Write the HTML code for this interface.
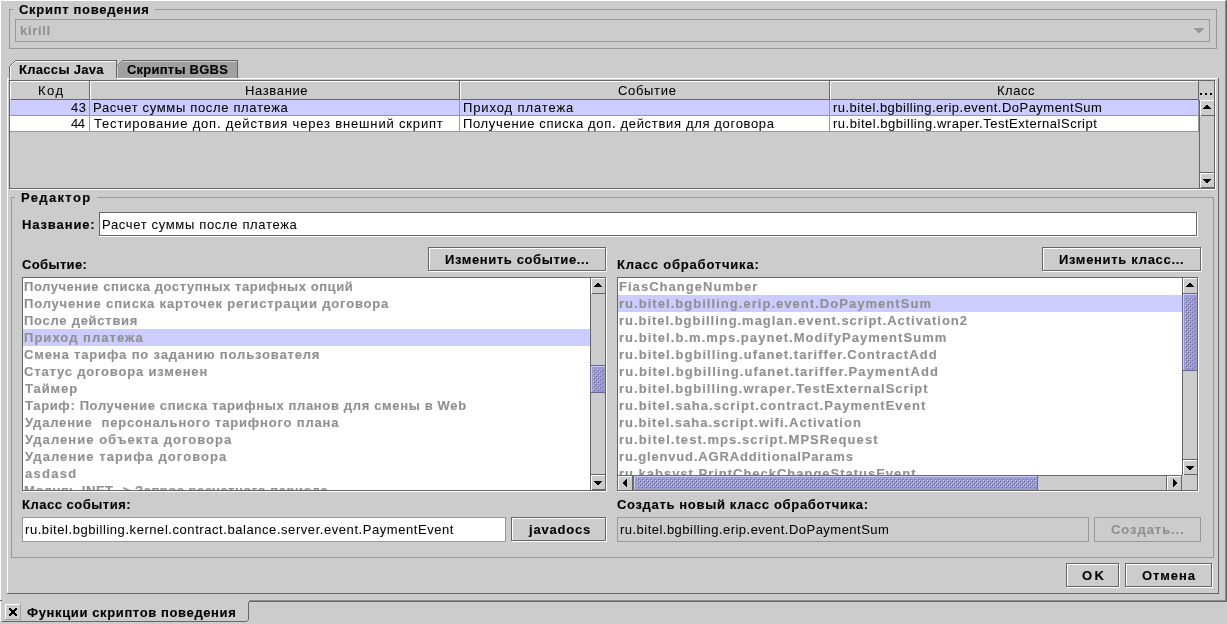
<!DOCTYPE html>
<html><head><meta charset="utf-8"><style>
html,body{margin:0;padding:0;width:1227px;height:624px;overflow:hidden;background:#cccccc}
i{position:absolute;display:block}
b{position:absolute;font-family:"Liberation Sans",sans-serif;font-size:13px;line-height:15px;font-weight:normal;white-space:pre;will-change:transform;-webkit-text-stroke:0.05px currentColor}
b.B{font-weight:bold;-webkit-text-stroke-width:0.12px}
</style></head><body>
<i style="left:0px;top:0px;width:1227px;height:624px;background:#cccccc"></i>
<i style="left:0px;top:0px;width:1226px;height:1px;background:#ffffff"></i>
<i style="left:0px;top:0px;width:1px;height:621px;background:#ffffff"></i>
<i style="left:1225px;top:1px;width:1px;height:600px;background:#8a8a8a"></i>
<i style="left:1226px;top:0px;width:1px;height:602px;background:#666666"></i>
<i style="left:249px;top:600px;width:977px;height:1px;background:#8a8a8a"></i>
<i style="left:249px;top:601px;width:978px;height:1px;background:#666666"></i>
<i style="left:248px;top:601px;width:1px;height:1px;background:#dddddd"></i>
<i style="left:248px;top:602px;width:1px;height:18px;background:#666666"></i>
<i style="left:247px;top:620px;width:1px;height:1px;background:#666666"></i>
<i style="left:2px;top:621px;width:245px;height:1px;background:#666666"></i>
<i style="left:0px;top:600px;width:2px;height:1px;background:#666666"></i>
<i style="left:5px;top:604px;width:16px;height:16px;background:#cccccc"></i>
<i style="left:5px;top:604px;width:15px;height:1px;background:#ffffff"></i>
<i style="left:5px;top:604px;width:1px;height:15px;background:#ffffff"></i>
<i style="left:5px;top:619px;width:16px;height:1px;background:#a0a0a0"></i>
<i style="left:20px;top:604px;width:1px;height:16px;background:#a0a0a0"></i>
<i style="left:9px;top:608px;width:1px;height:1px;background:#000"></i>
<i style="left:16px;top:608px;width:1px;height:1px;background:#000"></i>
<i style="left:10px;top:608px;width:1px;height:1px;background:#000"></i>
<i style="left:9px;top:609px;width:1px;height:1px;background:#000"></i>
<i style="left:15px;top:608px;width:1px;height:1px;background:#000"></i>
<i style="left:16px;top:609px;width:1px;height:1px;background:#000"></i>
<i style="left:10px;top:609px;width:1px;height:1px;background:#000"></i>
<i style="left:15px;top:609px;width:1px;height:1px;background:#000"></i>
<i style="left:11px;top:609px;width:1px;height:1px;background:#000"></i>
<i style="left:10px;top:610px;width:1px;height:1px;background:#000"></i>
<i style="left:14px;top:609px;width:1px;height:1px;background:#000"></i>
<i style="left:15px;top:610px;width:1px;height:1px;background:#000"></i>
<i style="left:11px;top:610px;width:1px;height:1px;background:#000"></i>
<i style="left:14px;top:610px;width:1px;height:1px;background:#000"></i>
<i style="left:12px;top:610px;width:1px;height:1px;background:#000"></i>
<i style="left:11px;top:611px;width:1px;height:1px;background:#000"></i>
<i style="left:13px;top:610px;width:1px;height:1px;background:#000"></i>
<i style="left:14px;top:611px;width:1px;height:1px;background:#000"></i>
<i style="left:12px;top:611px;width:1px;height:1px;background:#000"></i>
<i style="left:13px;top:611px;width:1px;height:1px;background:#000"></i>
<i style="left:13px;top:611px;width:1px;height:1px;background:#000"></i>
<i style="left:12px;top:612px;width:1px;height:1px;background:#000"></i>
<i style="left:12px;top:611px;width:1px;height:1px;background:#000"></i>
<i style="left:13px;top:612px;width:1px;height:1px;background:#000"></i>
<i style="left:13px;top:612px;width:1px;height:1px;background:#000"></i>
<i style="left:12px;top:612px;width:1px;height:1px;background:#000"></i>
<i style="left:14px;top:612px;width:1px;height:1px;background:#000"></i>
<i style="left:13px;top:613px;width:1px;height:1px;background:#000"></i>
<i style="left:11px;top:612px;width:1px;height:1px;background:#000"></i>
<i style="left:12px;top:613px;width:1px;height:1px;background:#000"></i>
<i style="left:14px;top:613px;width:1px;height:1px;background:#000"></i>
<i style="left:11px;top:613px;width:1px;height:1px;background:#000"></i>
<i style="left:15px;top:613px;width:1px;height:1px;background:#000"></i>
<i style="left:14px;top:614px;width:1px;height:1px;background:#000"></i>
<i style="left:10px;top:613px;width:1px;height:1px;background:#000"></i>
<i style="left:11px;top:614px;width:1px;height:1px;background:#000"></i>
<i style="left:15px;top:614px;width:1px;height:1px;background:#000"></i>
<i style="left:10px;top:614px;width:1px;height:1px;background:#000"></i>
<i style="left:16px;top:614px;width:1px;height:1px;background:#000"></i>
<i style="left:15px;top:615px;width:1px;height:1px;background:#000"></i>
<i style="left:9px;top:614px;width:1px;height:1px;background:#000"></i>
<i style="left:10px;top:615px;width:1px;height:1px;background:#000"></i>
<i style="left:16px;top:615px;width:1px;height:1px;background:#000"></i>
<i style="left:9px;top:615px;width:1px;height:1px;background:#000"></i>
<b class="B" style="left:27px;top:605px;letter-spacing:0.620px;color:#000;">Функции скриптов поведения</b>
<i style="left:9px;top:9px;width:1208px;height:1px;background:#999999"></i>
<i style="left:9px;top:48px;width:1208px;height:1px;background:#999999"></i>
<i style="left:9px;top:9px;width:1px;height:40px;background:#999999"></i>
<i style="left:1216px;top:9px;width:1px;height:40px;background:#999999"></i>
<i style="left:13px;top:5px;width:142px;height:8px;background:#cccccc"></i>
<b class="B" style="left:19px;top:2px;letter-spacing:0.700px;color:#000;">Скрипт поведения</b>
<i style="left:15px;top:19px;width:1195px;height:1px;background:#999999"></i>
<i style="left:15px;top:41px;width:1195px;height:1px;background:#999999"></i>
<i style="left:15px;top:19px;width:1px;height:23px;background:#999999"></i>
<i style="left:1209px;top:19px;width:1px;height:23px;background:#999999"></i>
<b class="B" style="left:20px;top:23px;letter-spacing:0.700px;color:#909090;">kirill</b>
<i style="left:1194px;top:28px;width:10px;height:1px;background:#999999"></i>
<i style="left:1195px;top:29px;width:8px;height:1px;background:#999999"></i>
<i style="left:1196px;top:30px;width:6px;height:1px;background:#999999"></i>
<i style="left:1197px;top:31px;width:4px;height:1px;background:#999999"></i>
<i style="left:1198px;top:32px;width:2px;height:1px;background:#999999"></i>
<i style="left:7px;top:78px;width:2px;height:1px;background:#ffffff"></i>
<i style="left:117px;top:78px;width:1101px;height:1px;background:#ffffff"></i>
<i style="left:7px;top:78px;width:1px;height:515px;background:#ffffff"></i>
<i style="left:7px;top:593px;width:1212px;height:1px;background:#666666"></i>
<i style="left:1218px;top:78px;width:1px;height:516px;background:#666666"></i>
<i style="left:117px;top:61px;width:121px;height:17px;background:#a0a0a0"></i>
<i style="left:117px;top:60px;width:5px;height:1px;background:#cccccc"></i>
<i style="left:117px;top:61px;width:4px;height:1px;background:#cccccc"></i>
<i style="left:117px;top:62px;width:3px;height:1px;background:#cccccc"></i>
<i style="left:117px;top:63px;width:2px;height:1px;background:#cccccc"></i>
<i style="left:117px;top:64px;width:1px;height:1px;background:#cccccc"></i>
<i style="left:117px;top:65px;width:0px;height:1px;background:#cccccc"></i>
<i style="left:116px;top:66px;width:1px;height:1px;background:#666666"></i>
<i style="left:117px;top:66px;width:1px;height:1px;background:#cccccc"></i>
<i style="left:117px;top:65px;width:1px;height:1px;background:#666666"></i>
<i style="left:118px;top:65px;width:1px;height:1px;background:#cccccc"></i>
<i style="left:118px;top:64px;width:1px;height:1px;background:#666666"></i>
<i style="left:119px;top:64px;width:1px;height:1px;background:#cccccc"></i>
<i style="left:119px;top:63px;width:1px;height:1px;background:#666666"></i>
<i style="left:120px;top:63px;width:1px;height:1px;background:#cccccc"></i>
<i style="left:120px;top:62px;width:1px;height:1px;background:#666666"></i>
<i style="left:121px;top:62px;width:1px;height:1px;background:#cccccc"></i>
<i style="left:121px;top:61px;width:1px;height:1px;background:#666666"></i>
<i style="left:122px;top:61px;width:1px;height:1px;background:#cccccc"></i>
<i style="left:122px;top:60px;width:116px;height:1px;background:#666666"></i>
<i style="left:122px;top:61px;width:115px;height:1px;background:#cccccc"></i>
<i style="left:117px;top:66px;width:1px;height:12px;background:#cccccc"></i>
<i style="left:237px;top:60px;width:1px;height:18px;background:#666666"></i>
<b class="B" style="left:127px;top:62px;letter-spacing:0.227px;color:#000;">Скрипты BGBS</b>
<i style="left:9px;top:60px;width:6px;height:1px;background:#cccccc"></i>
<i style="left:9px;top:61px;width:5px;height:1px;background:#cccccc"></i>
<i style="left:9px;top:62px;width:4px;height:1px;background:#cccccc"></i>
<i style="left:9px;top:63px;width:3px;height:1px;background:#cccccc"></i>
<i style="left:9px;top:64px;width:2px;height:1px;background:#cccccc"></i>
<i style="left:9px;top:65px;width:1px;height:1px;background:#cccccc"></i>
<i style="left:9px;top:66px;width:1px;height:1px;background:#666666"></i>
<i style="left:10px;top:66px;width:1px;height:1px;background:#ffffff"></i>
<i style="left:10px;top:65px;width:1px;height:1px;background:#666666"></i>
<i style="left:11px;top:65px;width:1px;height:1px;background:#ffffff"></i>
<i style="left:11px;top:64px;width:1px;height:1px;background:#666666"></i>
<i style="left:12px;top:64px;width:1px;height:1px;background:#ffffff"></i>
<i style="left:12px;top:63px;width:1px;height:1px;background:#666666"></i>
<i style="left:13px;top:63px;width:1px;height:1px;background:#ffffff"></i>
<i style="left:13px;top:62px;width:1px;height:1px;background:#666666"></i>
<i style="left:14px;top:62px;width:1px;height:1px;background:#ffffff"></i>
<i style="left:14px;top:61px;width:1px;height:1px;background:#666666"></i>
<i style="left:15px;top:61px;width:1px;height:1px;background:#ffffff"></i>
<i style="left:15px;top:60px;width:1px;height:1px;background:#666666"></i>
<i style="left:9px;top:66px;width:1px;height:13px;background:#666666"></i>
<i style="left:10px;top:67px;width:1px;height:12px;background:#ffffff"></i>
<i style="left:15px;top:60px;width:102px;height:1px;background:#666666"></i>
<i style="left:16px;top:61px;width:100px;height:1px;background:#ffffff"></i>
<i style="left:116px;top:60px;width:1px;height:18px;background:#666666"></i>
<b class="B" style="left:19px;top:62px;letter-spacing:0.300px;color:#000;">Классы Java</b>
<i style="left:9px;top:80px;width:1206px;height:1px;background:#666666"></i>
<i style="left:9px;top:188px;width:1206px;height:1px;background:#666666"></i>
<i style="left:9px;top:80px;width:1px;height:109px;background:#666666"></i>
<i style="left:1214px;top:80px;width:1px;height:109px;background:#666666"></i>
<i style="left:1215px;top:81px;width:1px;height:109px;background:#ffffff"></i>
<i style="left:10px;top:189px;width:1206px;height:1px;background:#ffffff"></i>
<i style="left:10px;top:81px;width:79px;height:1px;background:#ffffff"></i>
<i style="left:10px;top:81px;width:1px;height:18px;background:#ffffff"></i>
<i style="left:89px;top:81px;width:1px;height:19px;background:#666666"></i>
<i style="left:11px;top:99px;width:79px;height:1px;background:#666666"></i>
<b style="left:38px;top:83px;letter-spacing:1.500px;color:#000;">Код</b>
<i style="left:90px;top:81px;width:369px;height:1px;background:#ffffff"></i>
<i style="left:90px;top:81px;width:1px;height:18px;background:#ffffff"></i>
<i style="left:459px;top:81px;width:1px;height:19px;background:#666666"></i>
<i style="left:91px;top:99px;width:369px;height:1px;background:#666666"></i>
<b style="left:245px;top:83px;letter-spacing:0.643px;color:#000;">Название</b>
<i style="left:460px;top:81px;width:369px;height:1px;background:#ffffff"></i>
<i style="left:460px;top:81px;width:1px;height:18px;background:#ffffff"></i>
<i style="left:829px;top:81px;width:1px;height:19px;background:#666666"></i>
<i style="left:461px;top:99px;width:369px;height:1px;background:#666666"></i>
<b style="left:618px;top:83px;letter-spacing:0.667px;color:#000;">Событие</b>
<i style="left:830px;top:81px;width:368px;height:1px;background:#ffffff"></i>
<i style="left:830px;top:81px;width:1px;height:18px;background:#ffffff"></i>
<i style="left:1198px;top:81px;width:1px;height:19px;background:#666666"></i>
<i style="left:831px;top:99px;width:368px;height:1px;background:#666666"></i>
<b style="left:997px;top:83px;letter-spacing:0.500px;color:#000;">Класс</b>
<i style="left:1200px;top:93px;width:2px;height:2px;background:#000"></i>
<i style="left:1205px;top:93px;width:2px;height:2px;background:#000"></i>
<i style="left:1210px;top:93px;width:2px;height:2px;background:#000"></i>
<i style="left:10px;top:100px;width:1189px;height:15px;background:#ccccff"></i>
<i style="left:10px;top:116px;width:1189px;height:15px;background:#ffffff"></i>
<i style="left:10px;top:115px;width:1189px;height:1px;background:#999999"></i>
<i style="left:10px;top:131px;width:1189px;height:1px;background:#999999"></i>
<i style="left:89px;top:100px;width:1px;height:32px;background:#999999"></i>
<i style="left:459px;top:100px;width:1px;height:32px;background:#999999"></i>
<i style="left:829px;top:100px;width:1px;height:32px;background:#999999"></i>
<i style="left:1198px;top:100px;width:1px;height:32px;background:#999999"></i>
<b style="left:71px;top:100px;letter-spacing:0.500px;color:#000;">43</b>
<b style="left:93px;top:100px;letter-spacing:0.660px;color:#000;">Расчет суммы после платежа</b>
<b style="left:463px;top:100px;letter-spacing:0.885px;color:#000;">Приход платежа</b>
<b style="left:833px;top:100px;letter-spacing:0.476px;color:#000;">ru.bitel.bgbilling.erip.event.DoPaymentSum</b>
<b style="left:71px;top:116px;letter-spacing:-0.500px;color:#000;">44</b>
<b style="left:94px;top:116px;letter-spacing:0.826px;color:#000;">Тестирование доп. действия через внешний скрипт</b>
<b style="left:463px;top:116px;letter-spacing:0.667px;color:#000;">Получение списка доп. действия для договора</b>
<b style="left:833px;top:116px;letter-spacing:0.523px;color:#000;">ru.bitel.bgbilling.wraper.TestExternalScript</b>
<i style="left:1199px;top:100px;width:1px;height:89px;background:#666666"></i>
<i style="left:1200px;top:100px;width:14px;height:1px;background:#ffffff"></i>
<i style="left:1200px;top:100px;width:1px;height:16px;background:#ffffff"></i>
<i style="left:1201px;top:115px;width:13px;height:1px;background:#666666"></i>
<i style="left:1206px;top:105px;width:2px;height:1px;background:#000"></i>
<i style="left:1205px;top:106px;width:4px;height:1px;background:#000"></i>
<i style="left:1204px;top:107px;width:6px;height:1px;background:#000"></i>
<i style="left:1203px;top:108px;width:8px;height:1px;background:#000"></i>
<i style="left:1200px;top:172px;width:14px;height:1px;background:#666666"></i>
<i style="left:1200px;top:173px;width:14px;height:1px;background:#ffffff"></i>
<i style="left:1200px;top:173px;width:1px;height:15px;background:#ffffff"></i>
<i style="left:1201px;top:187px;width:13px;height:1px;background:#666666"></i>
<i style="left:1203px;top:179px;width:8px;height:1px;background:#000"></i>
<i style="left:1204px;top:180px;width:6px;height:1px;background:#000"></i>
<i style="left:1205px;top:181px;width:4px;height:1px;background:#000"></i>
<i style="left:1206px;top:182px;width:2px;height:1px;background:#000"></i>
<i style="left:11px;top:197px;width:1203px;height:1px;background:#999999"></i>
<i style="left:11px;top:557px;width:1203px;height:1px;background:#999999"></i>
<i style="left:11px;top:197px;width:1px;height:361px;background:#999999"></i>
<i style="left:1213px;top:197px;width:1px;height:361px;background:#999999"></i>
<i style="left:15px;top:193px;width:82px;height:8px;background:#cccccc"></i>
<b class="B" style="left:21px;top:190px;letter-spacing:1.357px;color:#000;">Редактор</b>
<b class="B" style="left:22px;top:217px;letter-spacing:0.875px;color:#000;">Название:</b>
<i style="left:99px;top:212px;width:1099px;height:25px;background:#ffffff"></i>
<i style="left:100px;top:213px;width:1098px;height:1px;background:#ffffff"></i>
<i style="left:100px;top:236px;width:1098px;height:1px;background:#ffffff"></i>
<i style="left:100px;top:213px;width:1px;height:24px;background:#ffffff"></i>
<i style="left:1197px;top:213px;width:1px;height:24px;background:#ffffff"></i>
<i style="left:99px;top:212px;width:1098px;height:1px;background:#666666"></i>
<i style="left:99px;top:235px;width:1098px;height:1px;background:#666666"></i>
<i style="left:99px;top:212px;width:1px;height:24px;background:#666666"></i>
<i style="left:1196px;top:212px;width:1px;height:24px;background:#666666"></i>
<b style="left:102px;top:217px;letter-spacing:0.660px;color:#000;">Расчет суммы после платежа</b>
<b class="B" style="left:22px;top:257px;letter-spacing:0.357px;color:#000;">Событие:</b>
<i style="left:429px;top:248px;width:178px;height:1px;background:#ffffff"></i>
<i style="left:429px;top:271px;width:178px;height:1px;background:#ffffff"></i>
<i style="left:429px;top:248px;width:1px;height:24px;background:#ffffff"></i>
<i style="left:606px;top:248px;width:1px;height:24px;background:#ffffff"></i>
<i style="left:428px;top:247px;width:178px;height:1px;background:#666666"></i>
<i style="left:428px;top:270px;width:178px;height:1px;background:#666666"></i>
<i style="left:428px;top:247px;width:1px;height:24px;background:#666666"></i>
<i style="left:605px;top:247px;width:1px;height:24px;background:#666666"></i>
<b class="B" style="left:445px;top:252px;letter-spacing:0.611px;color:#000;">Изменить событие...</b>
<b class="B" style="left:617px;top:257px;letter-spacing:0.794px;color:#000;">Класс обработчика:</b>
<i style="left:1043px;top:248px;width:159px;height:1px;background:#ffffff"></i>
<i style="left:1043px;top:271px;width:159px;height:1px;background:#ffffff"></i>
<i style="left:1043px;top:248px;width:1px;height:24px;background:#ffffff"></i>
<i style="left:1201px;top:248px;width:1px;height:24px;background:#ffffff"></i>
<i style="left:1042px;top:247px;width:159px;height:1px;background:#666666"></i>
<i style="left:1042px;top:270px;width:159px;height:1px;background:#666666"></i>
<i style="left:1042px;top:247px;width:1px;height:24px;background:#666666"></i>
<i style="left:1200px;top:247px;width:1px;height:24px;background:#666666"></i>
<b class="B" style="left:1059px;top:252px;letter-spacing:0.688px;color:#000;">Изменить класс...</b>
<i style="left:23px;top:278px;width:568px;height:212px;background:#ffffff"></i>
<i style="left:22px;top:277px;width:584px;height:1px;background:#666666"></i>
<i style="left:22px;top:490px;width:584px;height:1px;background:#666666"></i>
<i style="left:22px;top:277px;width:1px;height:214px;background:#666666"></i>
<i style="left:605px;top:277px;width:1px;height:214px;background:#666666"></i>
<i style="left:606px;top:278px;width:1px;height:214px;background:#ffffff"></i>
<i style="left:23px;top:491px;width:584px;height:1px;background:#ffffff"></i>
<i style="left:23px;top:329px;width:567px;height:17px;background:#ccccff"></i>
<div style="position:absolute;left:23px;top:278px;width:567px;height:212px;overflow:hidden">
<b class="B" style="left:1px;top:1px;letter-spacing:0.550px;color:#909090;">Получение списка доступных тарифных опций</b>
<b class="B" style="left:1px;top:18px;letter-spacing:0.833px;color:#909090;">Получение списка карточек регистрации договора</b>
<b class="B" style="left:1px;top:35px;letter-spacing:0.731px;color:#909090;">После действия</b>
<b class="B" style="left:1px;top:52px;letter-spacing:1.038px;color:#909090;">Приход платежа</b>
<b class="B" style="left:1px;top:69px;letter-spacing:0.843px;color:#909090;">Смена тарифа по заданию пользователя</b>
<b class="B" style="left:1px;top:86px;letter-spacing:0.818px;color:#909090;">Статус договора изменен</b>
<b class="B" style="left:2px;top:103px;letter-spacing:0.900px;color:#909090;">Таймер</b>
<b class="B" style="left:2px;top:120px;letter-spacing:0.648px;color:#909090;">Тариф: Получение списка тарифных планов для смены в Web</b>
<b class="B" style="left:2px;top:137px;letter-spacing:0.816px;color:#909090;">Удаление  персонального тарифного плана</b>
<b class="B" style="left:2px;top:154px;letter-spacing:1.042px;color:#909090;">Удаление объекта договора</b>
<b class="B" style="left:2px;top:171px;letter-spacing:1.065px;color:#909090;">Удаление тарифа договора</b>
<b class="B" style="left:2px;top:188px;letter-spacing:1.300px;color:#909090;">asdasd</b>
<b class="B" style="left:1px;top:205px;letter-spacing:0.551px;color:#909090;">Модуль INET -> Запрос расчетного периода</b>
</div>
<i style="left:590px;top:278px;width:1px;height:212px;background:#666666"></i>
<i style="left:591px;top:278px;width:14px;height:1px;background:#ffffff"></i>
<i style="left:591px;top:278px;width:1px;height:16px;background:#ffffff"></i>
<i style="left:592px;top:293px;width:13px;height:1px;background:#666666"></i>
<i style="left:597px;top:283px;width:2px;height:1px;background:#000"></i>
<i style="left:596px;top:284px;width:4px;height:1px;background:#000"></i>
<i style="left:595px;top:285px;width:6px;height:1px;background:#000"></i>
<i style="left:594px;top:286px;width:8px;height:1px;background:#000"></i>
<i style="left:590px;top:365px;width:15px;height:28px;background:#9999cc"></i>
<i style="left:590px;top:365px;width:15px;height:1px;background:#666699"></i>
<i style="left:590px;top:365px;width:1px;height:28px;background:#666699"></i>
<i style="left:590px;top:392px;width:15px;height:1px;background:#666699"></i>
<i style="left:591px;top:366px;width:14px;height:1px;background:#ccccff"></i>
<i style="left:591px;top:366px;width:1px;height:26px;background:#ccccff"></i>
<svg style="position:absolute;left:593px;top:369px" width="10" height="22" shape-rendering="crispEdges"><pattern id="p593_369" width="4" height="4" patternUnits="userSpaceOnUse"><rect x="0" y="0" width="1" height="1" fill="#ccccff"/><rect x="2" y="2" width="1" height="1" fill="#ccccff"/><rect x="1" y="1" width="1" height="1" fill="#666699"/><rect x="3" y="3" width="1" height="1" fill="#666699"/></pattern><rect width="10" height="22" fill="url(#p593_369)"/></svg>
<i style="left:591px;top:474px;width:14px;height:1px;background:#666666"></i>
<i style="left:591px;top:475px;width:14px;height:1px;background:#ffffff"></i>
<i style="left:591px;top:475px;width:1px;height:15px;background:#ffffff"></i>
<i style="left:592px;top:489px;width:13px;height:1px;background:#666666"></i>
<i style="left:594px;top:481px;width:8px;height:1px;background:#000"></i>
<i style="left:595px;top:482px;width:6px;height:1px;background:#000"></i>
<i style="left:596px;top:483px;width:4px;height:1px;background:#000"></i>
<i style="left:597px;top:484px;width:2px;height:1px;background:#000"></i>
<i style="left:618px;top:278px;width:565px;height:197px;background:#ffffff"></i>
<i style="left:617px;top:277px;width:581px;height:1px;background:#666666"></i>
<i style="left:617px;top:490px;width:581px;height:1px;background:#666666"></i>
<i style="left:617px;top:277px;width:1px;height:214px;background:#666666"></i>
<i style="left:1197px;top:277px;width:1px;height:214px;background:#666666"></i>
<i style="left:1198px;top:278px;width:1px;height:214px;background:#ffffff"></i>
<i style="left:618px;top:491px;width:581px;height:1px;background:#ffffff"></i>
<i style="left:618px;top:295px;width:564px;height:17px;background:#ccccff"></i>
<div style="position:absolute;left:618px;top:278px;width:564px;height:197px;overflow:hidden">
<b class="B" style="left:1px;top:1px;letter-spacing:1.033px;color:#909090;">FiasChangeNumber</b>
<b class="B" style="left:1px;top:18px;letter-spacing:1.037px;color:#909090;">ru.bitel.bgbilling.erip.event.DoPaymentSum</b>
<b class="B" style="left:1px;top:35px;letter-spacing:0.969px;color:#909090;">ru.bitel.bgbilling.maglan.event.script.Activation2</b>
<b class="B" style="left:1px;top:52px;letter-spacing:1.050px;color:#909090;">ru.bitel.b.m.mps.paynet.ModifyPaymentSumm</b>
<b class="B" style="left:1px;top:69px;letter-spacing:1.056px;color:#909090;">ru.bitel.bgbilling.ufanet.tariffer.ContractAdd</b>
<b class="B" style="left:1px;top:86px;letter-spacing:1.091px;color:#909090;">ru.bitel.bgbilling.ufanet.tariffer.PaymentAdd</b>
<b class="B" style="left:1px;top:103px;letter-spacing:1.035px;color:#909090;">ru.bitel.bgbilling.wraper.TestExternalScript</b>
<b class="B" style="left:1px;top:120px;letter-spacing:1.037px;color:#909090;">ru.bitel.saha.script.contract.PaymentEvent</b>
<b class="B" style="left:1px;top:137px;letter-spacing:0.986px;color:#909090;">ru.bitel.saha.script.wifi.Activation</b>
<b class="B" style="left:1px;top:154px;letter-spacing:1.059px;color:#909090;">ru.bitel.test.mps.script.MPSRequest</b>
<b class="B" style="left:1px;top:171px;letter-spacing:0.845px;color:#909090;">ru.glenvud.AGRAdditionalParams</b>
<b class="B" style="left:1px;top:188px;letter-spacing:0.986px;color:#909090;">ru.kabsyst.PrintCheckChangeStatusEvent</b>
</div>
<i style="left:1182px;top:278px;width:1px;height:197px;background:#666666"></i>
<i style="left:1183px;top:278px;width:14px;height:1px;background:#ffffff"></i>
<i style="left:1183px;top:278px;width:1px;height:16px;background:#ffffff"></i>
<i style="left:1184px;top:293px;width:13px;height:1px;background:#666666"></i>
<i style="left:1189px;top:283px;width:2px;height:1px;background:#000"></i>
<i style="left:1188px;top:284px;width:4px;height:1px;background:#000"></i>
<i style="left:1187px;top:285px;width:6px;height:1px;background:#000"></i>
<i style="left:1186px;top:286px;width:8px;height:1px;background:#000"></i>
<i style="left:1182px;top:293px;width:15px;height:78px;background:#9999cc"></i>
<i style="left:1182px;top:293px;width:15px;height:1px;background:#666699"></i>
<i style="left:1182px;top:293px;width:1px;height:78px;background:#666699"></i>
<i style="left:1182px;top:370px;width:15px;height:1px;background:#666699"></i>
<i style="left:1183px;top:294px;width:14px;height:1px;background:#ccccff"></i>
<i style="left:1183px;top:294px;width:1px;height:76px;background:#ccccff"></i>
<svg style="position:absolute;left:1185px;top:297px" width="10" height="72" shape-rendering="crispEdges"><pattern id="p1185_297" width="4" height="4" patternUnits="userSpaceOnUse"><rect x="0" y="0" width="1" height="1" fill="#ccccff"/><rect x="2" y="2" width="1" height="1" fill="#ccccff"/><rect x="1" y="1" width="1" height="1" fill="#666699"/><rect x="3" y="3" width="1" height="1" fill="#666699"/></pattern><rect width="10" height="72" fill="url(#p1185_297)"/></svg>
<i style="left:1183px;top:459px;width:14px;height:1px;background:#666666"></i>
<i style="left:1183px;top:460px;width:14px;height:1px;background:#ffffff"></i>
<i style="left:1183px;top:460px;width:1px;height:15px;background:#ffffff"></i>
<i style="left:1184px;top:474px;width:13px;height:1px;background:#666666"></i>
<i style="left:1186px;top:466px;width:8px;height:1px;background:#000"></i>
<i style="left:1187px;top:467px;width:6px;height:1px;background:#000"></i>
<i style="left:1188px;top:468px;width:4px;height:1px;background:#000"></i>
<i style="left:1189px;top:469px;width:2px;height:1px;background:#000"></i>
<i style="left:618px;top:475px;width:564px;height:1px;background:#666666"></i>
<i style="left:618px;top:476px;width:15px;height:1px;background:#ffffff"></i>
<i style="left:618px;top:476px;width:1px;height:14px;background:#ffffff"></i>
<i style="left:632px;top:476px;width:1px;height:14px;background:#666666"></i>
<i style="left:623px;top:482px;width:1px;height:2px;background:#000"></i>
<i style="left:624px;top:481px;width:1px;height:4px;background:#000"></i>
<i style="left:625px;top:480px;width:1px;height:6px;background:#000"></i>
<i style="left:626px;top:479px;width:1px;height:8px;background:#000"></i>
<i style="left:633px;top:475px;width:405px;height:15px;background:#9999cc"></i>
<i style="left:633px;top:475px;width:405px;height:1px;background:#666699"></i>
<i style="left:633px;top:475px;width:1px;height:15px;background:#666699"></i>
<i style="left:1037px;top:475px;width:1px;height:15px;background:#666699"></i>
<i style="left:634px;top:476px;width:403px;height:1px;background:#ccccff"></i>
<i style="left:634px;top:476px;width:1px;height:14px;background:#ccccff"></i>
<svg style="position:absolute;left:637px;top:478px" width="399" height="10" shape-rendering="crispEdges"><pattern id="p637_478" width="4" height="4" patternUnits="userSpaceOnUse"><rect x="0" y="0" width="1" height="1" fill="#ccccff"/><rect x="2" y="2" width="1" height="1" fill="#ccccff"/><rect x="1" y="1" width="1" height="1" fill="#666699"/><rect x="3" y="3" width="1" height="1" fill="#666699"/></pattern><rect width="399" height="10" fill="url(#p637_478)"/></svg>
<i style="left:1167px;top:476px;width:14px;height:1px;background:#ffffff"></i>
<i style="left:1167px;top:476px;width:1px;height:14px;background:#ffffff"></i>
<i style="left:1166px;top:476px;width:1px;height:14px;background:#666666"></i>
<i style="left:1173px;top:479px;width:1px;height:8px;background:#000"></i>
<i style="left:1174px;top:480px;width:1px;height:6px;background:#000"></i>
<i style="left:1175px;top:481px;width:1px;height:4px;background:#000"></i>
<i style="left:1176px;top:482px;width:1px;height:2px;background:#000"></i>
<i style="left:1181px;top:476px;width:1px;height:14px;background:#666666"></i>
<b class="B" style="left:22px;top:497px;letter-spacing:0.500px;color:#000;">Класс события:</b>
<i style="left:22px;top:517px;width:484px;height:25px;background:#ffffff"></i>
<i style="left:22px;top:517px;width:484px;height:1px;background:#999999"></i>
<i style="left:22px;top:541px;width:484px;height:1px;background:#999999"></i>
<i style="left:22px;top:517px;width:1px;height:25px;background:#999999"></i>
<i style="left:505px;top:517px;width:1px;height:25px;background:#999999"></i>
<b style="left:25px;top:522px;letter-spacing:0.560px;color:#000;">ru.bitel.bgbilling.kernel.contract.balance.server.event.PaymentEvent</b>
<i style="left:512px;top:518px;width:95px;height:1px;background:#ffffff"></i>
<i style="left:512px;top:541px;width:95px;height:1px;background:#ffffff"></i>
<i style="left:512px;top:518px;width:1px;height:24px;background:#ffffff"></i>
<i style="left:606px;top:518px;width:1px;height:24px;background:#ffffff"></i>
<i style="left:511px;top:517px;width:95px;height:1px;background:#666666"></i>
<i style="left:511px;top:540px;width:95px;height:1px;background:#666666"></i>
<i style="left:511px;top:517px;width:1px;height:24px;background:#666666"></i>
<i style="left:605px;top:517px;width:1px;height:24px;background:#666666"></i>
<b class="B" style="left:529px;top:522px;letter-spacing:0.786px;color:#000;">javadocs</b>
<b class="B" style="left:617px;top:497px;letter-spacing:0.661px;color:#000;">Создать новый класс обработчика:</b>
<i style="left:617px;top:517px;width:472px;height:1px;background:#999999"></i>
<i style="left:617px;top:541px;width:472px;height:1px;background:#999999"></i>
<i style="left:617px;top:517px;width:1px;height:25px;background:#999999"></i>
<i style="left:1088px;top:517px;width:1px;height:25px;background:#999999"></i>
<b style="left:620px;top:522px;letter-spacing:0.476px;color:#000;">ru.bitel.bgbilling.erip.event.DoPaymentSum</b>
<i style="left:1094px;top:517px;width:107px;height:1px;background:#999999"></i>
<i style="left:1094px;top:541px;width:107px;height:1px;background:#999999"></i>
<i style="left:1094px;top:517px;width:1px;height:25px;background:#999999"></i>
<i style="left:1200px;top:517px;width:1px;height:25px;background:#999999"></i>
<b class="B" style="left:1111px;top:522px;letter-spacing:0.944px;color:#909090;">Создать...</b>
<i style="left:1067px;top:564px;width:53px;height:1px;background:#ffffff"></i>
<i style="left:1067px;top:587px;width:53px;height:1px;background:#ffffff"></i>
<i style="left:1067px;top:564px;width:1px;height:24px;background:#ffffff"></i>
<i style="left:1119px;top:564px;width:1px;height:24px;background:#ffffff"></i>
<i style="left:1066px;top:563px;width:53px;height:1px;background:#666666"></i>
<i style="left:1066px;top:586px;width:53px;height:1px;background:#666666"></i>
<i style="left:1066px;top:563px;width:1px;height:24px;background:#666666"></i>
<i style="left:1118px;top:563px;width:1px;height:24px;background:#666666"></i>
<b class="B" style="left:1082px;top:568px;letter-spacing:2.500px;color:#000;">OK</b>
<i style="left:1126px;top:564px;width:87px;height:1px;background:#ffffff"></i>
<i style="left:1126px;top:587px;width:87px;height:1px;background:#ffffff"></i>
<i style="left:1126px;top:564px;width:1px;height:24px;background:#ffffff"></i>
<i style="left:1212px;top:564px;width:1px;height:24px;background:#ffffff"></i>
<i style="left:1125px;top:563px;width:87px;height:1px;background:#666666"></i>
<i style="left:1125px;top:586px;width:87px;height:1px;background:#666666"></i>
<i style="left:1125px;top:563px;width:1px;height:24px;background:#666666"></i>
<i style="left:1211px;top:563px;width:1px;height:24px;background:#666666"></i>
<b class="B" style="left:1142px;top:568px;letter-spacing:0.900px;color:#000;">Отмена</b>
</body></html>
